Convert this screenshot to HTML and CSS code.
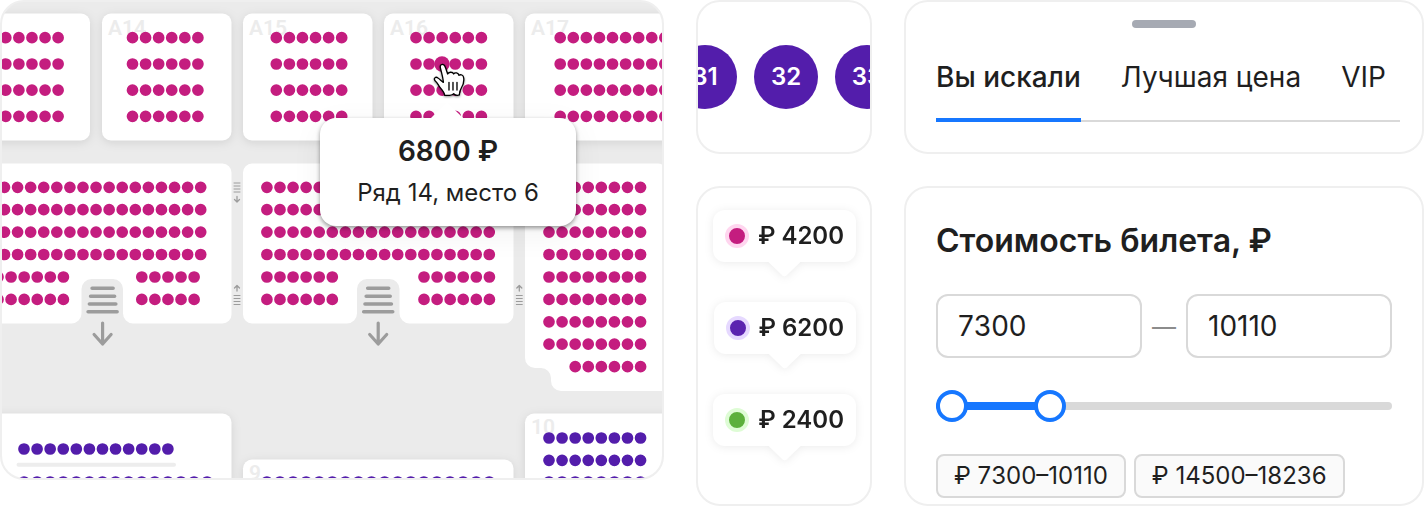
FILE: index.html
```html
<!DOCTYPE html>
<html lang="ru">
<head>
<meta charset="utf-8">
<meta name="viewport" content="width=device-width, initial-scale=1">
<title>Выбор билетов</title>
<link rel="stylesheet" href="styles.css">
</head>
<body>
<main class="layout">
  <section class="card map" aria-label="Схема зала">
    <svg class="map-scene" viewBox="2 2 660 476" preserveAspectRatio="xMinYMin slice" aria-hidden="true">
      <defs>
        <g id="stairs">
          <path d="M-10.500 288.300h21M-12 296.200h24M-13.200 304h26.400M-14.500 311.700h29" stroke-width="3.600"/>
          <path d="M0 323V344M-8.500 334.500L0 344L8.500 334.500" stroke-width="3.200"/>
        </g>
        <g id="steps">
          <path d="M-3 0h6M-3 3h6M-3 6h6M-3 9h6" stroke-width="1"/>
          <path d="M0 13.500V18.500M-2.500 16.500L0 19L2.500 16.500" stroke-width="1.300"/>
        </g>
      </defs>

      <g class="sector raised">
        <rect x="-40" y="13.500" width="130" height="127" rx="9"/>
        <rect x="102" y="13.500" width="129.500" height="127" rx="9"/>
        <rect x="243" y="13.500" width="129.500" height="127" rx="9"/>
        <rect x="384" y="13.500" width="129.500" height="127" rx="9"/>
        <rect x="525" y="13.500" width="160" height="127" rx="9"/>
      </g>
      <g class="sector">
        <path d="M-10 163.500H222.500a9 9 0 0 1 9 9V314.500a9 9 0 0 1-9 9H133a10 10 0 0 1-10-10V289a10 10 0 0 0-10-10H91.500a10 10 0 0 0-10 10V313.500a10 10 0 0 1-10 10H-10z"/>
        <path d="M252 163.500H504.500a9 9 0 0 1 9 9V314.500a9 9 0 0 1-9 9H409.500a10 10 0 0 1-10-10V289a10 10 0 0 0-10-10H367a10 10 0 0 0-10 10V313.500a10 10 0 0 1-10 10H252a9 9 0 0 1-9-9V172.500a9 9 0 0 1 9-9z"/>
        <path d="M534 163.500H658a9 9 0 0 1 9 9V386a5 5 0 0 1-5 5H561a10 10 0 0 1-10-10V378a10 10 0 0 0-10-10H535a10 10 0 0 1-10-10V172.500a9 9 0 0 1 9-9z"/>
      </g>
      <g class="sector raised">
        <rect x="-40" y="413.500" width="271.500" height="120" rx="9"/>
        <rect x="243" y="459.500" width="270.500" height="120" rx="9"/>
        <rect x="525" y="413.500" width="160" height="120" rx="9"/>
      </g>
      <path class="stage-line" d="M18.500 464.800H174"/>

      <g class="sector-name">
        <text x="108" y="35">A14</text>
        <text x="249" y="35">A15</text>
        <text x="390" y="35">A16</text>
        <text x="531" y="35">A17</text>
        <text x="249" y="480">9</text>
        <text x="531" y="434">10</text>
      </g>

      <g class="seats seats-pink">
        <path d="M5.800 37.700h53M5.800 64h53M5.800 90.200h53M5.800 116.300h53"/>
        <path d="M132.500 37.700h66M132.500 64h66M132.500 90.200h66M132.500 116.300h66"/>
        <path d="M276.300 37.700h66M276.300 64h66M276.300 90.200h66M276.300 116.300h66"/>
        <path d="M416 37.700h66M416 64h66M416 90.200h66M416 116.300h66"/>
        <path d="M560.200 37.700h110M560.200 64h110M560.200 90.200h110M560.200 116.300h110"/>
        <path d="M4.500 187.300h197M4.500 209.700h197M4.500 232.100h197M4.500 254.500h197M-2 277h66M-2 299.400h66M141.800 277h53M141.800 299.400h53"/>
        <path d="M266.900 187.300h223M266.900 209.700h223M266.900 232.100h223M266.900 254.500h223M266.900 277h66M266.900 299.400h66M424 277h66M424 299.400h66"/>
        <path d="M549 187.300h92M549 209.700h92M549 232.100h92M549 254.500h92M549 277h92M549 299.400h92M549 321.800h92M549 344.200h92M575.200 366.700h66"/>
        <circle cx="442" cy="64" r="7.700"/>
      </g>
      <g class="seats seats-violet">
        <path d="M24 449h145M24 482h183.500M266.900 482h223M549 438h92M549 460.300h92M549 482h92"/>
      </g>

      <g class="signs">
        <use href="#stairs" x="102.600"/>
        <use href="#stairs" x="378.200"/>
        <use href="#steps" transform="translate(237 183)"/>
        <use href="#steps" transform="translate(237 304.500) scale(1 -1)"/>
        <use href="#steps" transform="translate(519.300 304.500) scale(1 -1)"/>
      </g>

      <g class="pointer" transform="translate(320 0) scale(.3333)">
        <path d="M362 207C359 198 362 193 367 193C372 193 375 197 377 204L383 222C385 216 398 214 401 222C405 216 415 218 417 226C422 222 430 225 431 233C433 245 429 256 424 264C419 272 418 278 418 285C412 287 406 286 401 281C396 287 386 287 374 286C374 278 367 270 360 262C354 255 354 250 346 243C339 235 347 229 354 234C360 238 364 243 370 247C370 236 365 220 362 207Z"/>
        <path d="M387 247V270M399 247V270M411 247V270"/>
      </g>
    </svg>
    <div class="seat-tip" role="tooltip">
      <strong class="seat-tip-price">6800 ₽</strong>
      <span class="seat-tip-place">Ряд 14, место 6</span>
    </div>
  </section>

  <section class="card seat-picker" aria-label="Места">
    <button class="seat" type="button">31</button>
    <button class="seat" type="button">32</button>
    <button class="seat" type="button">33</button>
  </section>

  <section class="card tabs-card">
    <div class="handle"></div>
    <div class="tabs" role="tablist">
      <button class="tab tab-active" type="button" role="tab" aria-selected="true">Вы искали</button>
      <button class="tab" type="button" role="tab" aria-selected="false">Лучшая цена</button>
      <button class="tab" type="button" role="tab" aria-selected="false">VIP</button>
    </div>
  </section>

  <section class="card price-tags" aria-label="Цены">
    <div class="tag"><span class="dot dot-pink"></span>₽ 4200</div>
    <div class="tag"><span class="dot dot-violet"></span>₽ 6200</div>
    <div class="tag"><span class="dot dot-green"></span>₽ 2400</div>
  </section>

  <section class="card filter">
    <h2 class="filter-title">Стоимость билета, ₽</h2>
    <div class="range-fields">
      <input class="field" type="text" inputmode="numeric" value="7300" aria-label="Цена от">
      <span class="range-dash">—</span>
      <input class="field" type="text" inputmode="numeric" value="10110" aria-label="Цена до">
    </div>
    <div class="slider">
      <div class="slider-rail"><div class="slider-fill"></div></div>
      <input class="slider-input" type="range" min="0" max="1000" value="0" aria-label="Минимальная цена">
      <input class="slider-input" type="range" min="0" max="1000" value="231" aria-label="Максимальная цена">
    </div>
    <div class="chips">
      <button class="chip" type="button">₽ 7300–10110</button>
      <button class="chip" type="button">₽ 14500–18236</button>
    </div>
  </section>
</main>
</body>
</html>
```

FILE: styles.css
```css
*, *::before, *::after { box-sizing: border-box; }

body {
  margin: 0;
  background: #fff;
  color: #1f1f1f;
  font-family: Inter, "Liberation Sans", sans-serif;
  font-size: 24px;
  line-height: 32px;
}

button, input { font: inherit; color: inherit; margin: 0; }
button { cursor: pointer; }

.layout {
  display: grid;
  grid-template-columns: 664fr 176fr 520fr;
  grid-template-rows: auto 1fr;
  gap: 32px;
}

.card {
  min-width: 0;
  border: 2px solid #efefef;
  border-radius: 24px;
  background: #fff;
}

/* Seat map */
.map {
  position: relative;
  grid-row: 1 / 3;
  align-self: start;
  overflow: hidden;
  background: #ebebeb;
}
.map-scene { display: block; width: 100%; height: 476px; }
.sector { fill: #fff; }
.raised { filter: drop-shadow(0 2px 5px rgba(0, 0, 0, .1)); }
.sector-name {
  fill: #ececec;
  font-family: Roboto, sans-serif;
  font-size: 21px;
  font-weight: 600;
}
.stage-line { stroke: #ededed; stroke-width: 4px; stroke-linecap: round; }
.seats path {
  fill: none;
  stroke-width: 11.7px;
  stroke-linecap: round;
  stroke-dasharray: 0 13.08;
}
.seats-pink { fill: #c41d7f; stroke: #c41d7f; }
.seats-pink circle { stroke: none; }
.seats-violet { stroke: #531dab; }
.signs { fill: none; stroke: #9c9c9c; stroke-linecap: round; stroke-linejoin: round; }
.pointer {
  fill: #fff;
  stroke: #000;
  stroke-width: 4px;
  stroke-linecap: round;
  stroke-linejoin: round;
  filter: drop-shadow(0 3px 3px rgba(0, 0, 0, .4));
}

.seat-tip {
  position: absolute;
  top: 116px;
  left: 318px;
  display: flex;
  flex-direction: column;
  align-items: center;
  gap: 8px;
  width: 256px;
  padding: 16px;
  border-radius: 16px;
  background: #fff;
  box-shadow: 0 2px 4px rgba(0, 0, 0, .4), 0 8px 32px rgba(0, 0, 0, .06);
  white-space: nowrap;
}
.seat-tip::before {
  content: "";
  position: absolute;
  bottom: 100%;
  left: 50%;
  width: 32px;
  height: 16px;
  margin-left: -17px;
  background: #fff;
  clip-path: polygon(0 100%, 44% 12%, 50% 3%, 56% 12%, 100% 100%);
}
.seat-tip-price { font-size: 28px; font-weight: 600; line-height: 34px; }
.seat-tip-place { line-height: 34px; }

/* Seat numbers */
.seat-picker {
  display: flex;
  align-items: center;
  justify-content: center;
  gap: 17px;
  padding-left: 4px;
  overflow: hidden;
}
.seat {
  flex: none;
  width: 64px;
  height: 64px;
  padding: 0;
  border: 0;
  border-radius: 50%;
  background: #531dab;
  color: #fff;
  font-weight: 600;
}

/* Tabs */
.tabs-card { padding: 18px 22px 30px 30px; }
.handle {
  width: 64px;
  height: 8px;
  margin: 0 auto 0 calc(50% - 36px);
  border-radius: 4px;
  background: #a6aab3;
}
.tabs {
  display: flex;
  gap: 40px;
  margin-top: 24px;
  box-shadow: inset 0 -2px #d9d9d9;
}
.tab {
  padding: 8px 0 24px;
  border: 0;
  border-bottom: 4px solid transparent;
  background: none;
  font-size: 28px;
  line-height: 34px;
  white-space: nowrap;
}
.tab-active { border-bottom-color: #1677ff; font-weight: 500; }

/* Price tags */
.price-tags {
  display: flex;
  flex-direction: column;
  align-items: flex-end;
  gap: 40px;
  padding: 22px 14px 58px 0;
}
.tag {
  position: relative;
  display: flex;
  align-items: center;
  gap: 9px;
  padding: 10px 12px;
  border-radius: 12px;
  background: #fff;
  font-weight: 600;
  white-space: nowrap;
  filter: drop-shadow(0 1px 4px rgba(0, 0, 0, .08));
}
.tag::after {
  content: "";
  position: absolute;
  top: 100%;
  left: 50%;
  width: 32px;
  height: 15px;
  margin-left: -16px;
  background: #fff;
  clip-path: polygon(0 0, 100% 0, 57% 88%, 50% 96%, 43% 88%);
}
.dot {
  width: 24px;
  height: 24px;
  border: 4px solid;
  border-radius: 50%;
}
.dot-pink { border-color: #ffd6ef; background: #c41d7f; }
.dot-violet { border-color: #e6d9ff; background: #5b24b0; }
.dot-green { border-color: #defcd5; background: #5cb03c; }

/* Price filter */
.filter { padding: 32px 30px 6px; }
.filter-title { margin: 0; font-size: 32px; font-weight: 600; line-height: 42px; }
.range-fields {
  display: grid;
  grid-template-columns: 1fr 44px 1fr;
  align-items: center;
  margin-top: 32px;
}
.field {
  width: 100%;
  height: 64px;
  padding: 0 20px;
  border: 2px solid #d9d9d9;
  border-radius: 12px;
  background: #fff;
  font-size: 28px;
  font-kerning: none;
}
.range-dash { padding-top: 2px; color: #8c8c8c; text-align: center; }
.slider { position: relative; height: 32px; margin-top: 32px; padding: 12px 0; }
.slider-rail { height: 8px; border-radius: 4px; background: #d9d9d9; }
.slider-fill { width: 23%; height: 8px; border-radius: 4px; background: #1677ff; }
.slider-input {
  position: absolute;
  inset: 0;
  width: 100%;
  height: 32px;
  appearance: none;
  background: none;
  pointer-events: none;
}
.slider-input::-webkit-slider-thumb {
  appearance: none;
  width: 32px;
  height: 32px;
  border: 4px solid #1677ff;
  border-radius: 50%;
  background: #fff;
  pointer-events: auto;
}
.chips { display: flex; flex-wrap: wrap; gap: 8px; margin-top: 32px; }
.chip {
  padding: 4px 16px;
  border: 2px solid #d9d9d9;
  border-radius: 8px;
  background: #fafafa;
  font-kerning: none;
  white-space: nowrap;
}
```
